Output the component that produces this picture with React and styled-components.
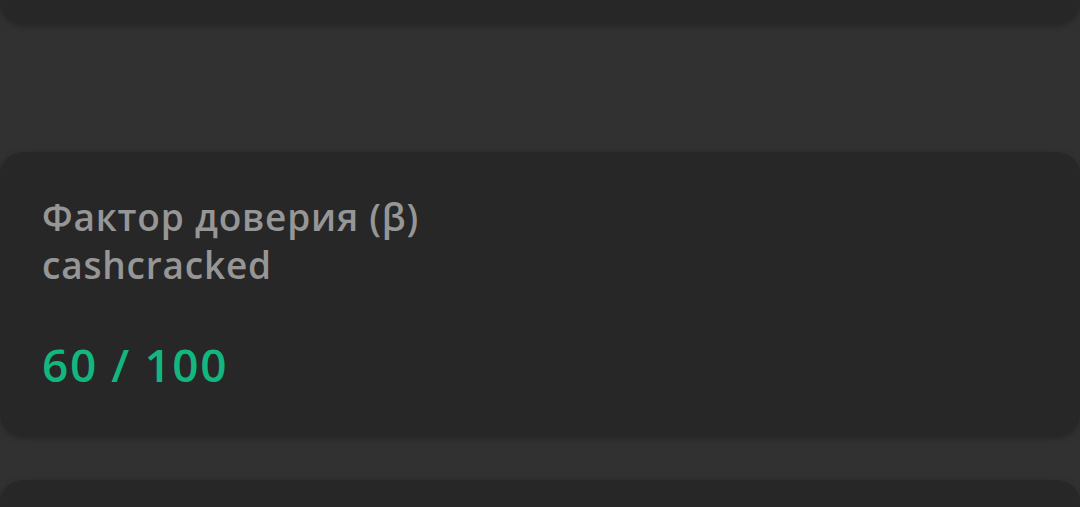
import styled, { createGlobalStyle } from "styled-components";

const GlobalStyle = createGlobalStyle`
  html, body {
    margin: 0;
    padding: 0;
    background: #313131;
  }
  body {
    font-family: "Open Sans", "Noto Sans", sans-serif;
  }
`;

const Page = styled.main`
  display: flex;
  flex-direction: column;
  height: 507px;
  overflow: hidden;
`;

const Card = styled.section`
  flex-shrink: 0;
  background: #272727;
  border-radius: ${(p) => (p.$cut === "top" ? "0 0 24px 24px" : p.$cut === "bottom" ? "24px 24px 0 0" : "24px")};
  box-shadow: 0 2px 6px rgba(0, 0, 0, 0.28);
  margin-top: ${(p) => p.$gap || 0}px;
  height: ${(p) => (p.$height ? `${p.$height}px` : "auto")};
  padding: ${(p) => (p.$height ? "0" : "41px 42px 40px")};
  box-sizing: border-box;
`;

const Label = styled.div`
  color: #969696;
  font-size: 37px;
  font-weight: 600;
  letter-spacing: 0.8px;
  line-height: 48px;
`;

const Value = styled.div`
  margin-top: 43px;
  color: #12b67e;
  font-size: 46px;
  font-weight: 600;
  letter-spacing: 1.6px;
  line-height: 64px;
`;

export default function App() {
  return (
    <>
      <GlobalStyle />
      <Page>
        <Card $cut="top" $height={24} />
        <Card $gap={128}>
          <Label>
            Фактор доверия (β)
            <br />
            cashcracked
          </Label>
          <Value>60 / 100</Value>
        </Card>
        <Card $cut="bottom" $gap={44} $height={60} />
      </Page>
    </>
  );
}
